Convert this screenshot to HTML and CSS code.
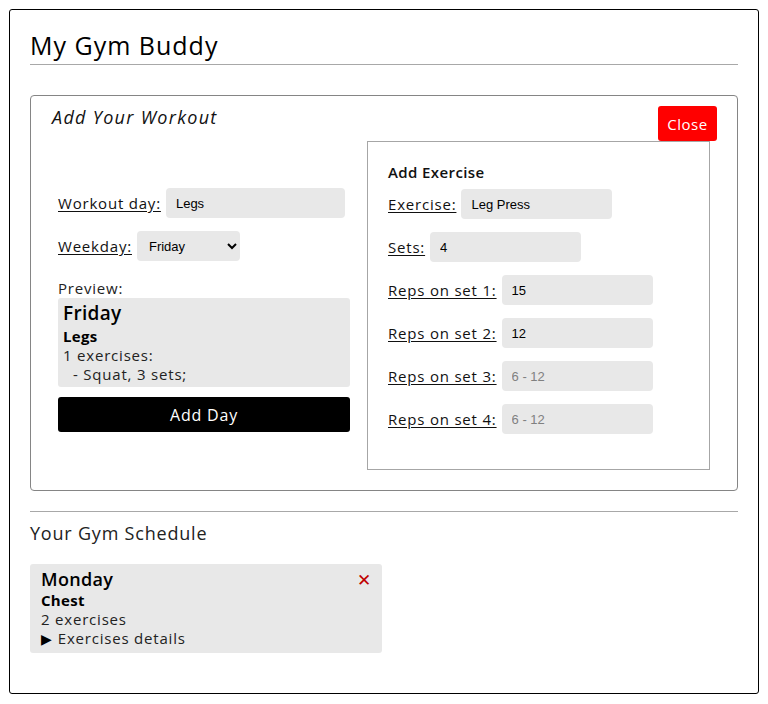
FILE: index.html
```html
<!DOCTYPE html>
<html>
<head>
<meta charset="utf-8">
<link rel="stylesheet" href="styles.css">
</head>
<body>
<div class="app">
  <header class="app-header">
    <h1 class="app-title">My Gym Buddy</h1>
  </header>

  <section class="workout">
    <div class="workout-head">
      <h2 class="workout-title">Add Your Workout</h2>
      <button class="btn-close">Close</button>
    </div>
    <div class="workout-body">
      <div class="day-col">
        <div class="field">
          <label class="lbl" for="wd">Workout day:</label>
          <input id="wd" class="inp inp-day" value="Legs">
        </div>
        <div class="field">
          <label class="lbl" for="wk">Weekday:</label>
          <select id="wk" class="sel">
            <option>Friday</option>
          </select>
        </div>
        <div class="preview-label">Preview:</div>
        <div class="preview">
          <div class="pv-day">Friday</div>
          <div class="pv-name">Legs</div>
          <div class="pv-line">1 exercises:</div>
          <div class="pv-line pv-item">- Squat, 3 sets;</div>
        </div>
        <button class="btn-add">Add Day</button>
      </div>

      <div class="ex-box">
        <h3 class="ex-title">Add Exercise</h3>
        <div class="field">
          <label class="lbl" for="ex">Exercise:</label>
          <input id="ex" class="inp" value="Leg Press">
        </div>
        <div class="field">
          <label class="lbl" for="sets">Sets:</label>
          <input id="sets" class="inp" value="4">
        </div>
        <div class="field">
          <label class="lbl" for="r1">Reps on set 1:</label>
          <input id="r1" class="inp" value="15">
        </div>
        <div class="field">
          <label class="lbl" for="r2">Reps on set 2:</label>
          <input id="r2" class="inp" value="12">
        </div>
        <div class="field">
          <label class="lbl" for="r3">Reps on set 3:</label>
          <input id="r3" class="inp" placeholder="6 - 12">
        </div>
        <div class="field">
          <label class="lbl" for="r4">Reps on set 4:</label>
          <input id="r4" class="inp" placeholder="6 - 12">
        </div>
      </div>
    </div>
  </section>

  <section class="schedule">
    <h2 class="schedule-title">Your Gym Schedule</h2>
    <div class="day-card">
      <div class="card-top">
        <div class="card-day">Monday</div>
        <span class="card-del">✕</span>
      </div>
      <div class="card-name">Chest</div>
      <div class="card-line">2 exercises</div>
      <div class="card-line"><span class="tri">▶</span>Exercises details</div>
    </div>
  </section>
</div>
</body>
</html>
```

FILE: styles.css
```css
* { box-sizing: border-box; }

body {
  margin: 0;
  font-family: "Open Sans", "DejaVu Sans", sans-serif;
  letter-spacing: 0.8px;
  color: #222;
  background: #fff;
}

.app {
  margin: 9px;
  width: 750px;
  height: 685px;
  border: 1px solid #000;
  border-radius: 3px;
  padding: 0 20px;
}

.app-header {
  padding-top: 20px;
  border-bottom: 1px solid #a8a8a8;
}

.app-title {
  margin: 0;
  font-size: 25px;
  font-weight: 500;
  letter-spacing: 1px;
  line-height: 30px;
  padding-bottom: 4px;
  color: #000;
}

.workout {
  margin-top: 30px;
  border: 1px solid #858585;
  border-radius: 4px;
  padding: 10px 0 20px 0;
}

.workout-head {
  display: flex;
  justify-content: space-between;
  align-items: flex-start;
  padding: 0 20px 0 21px;
}

.workout-title {
  margin: 0;
  font-size: 18px;
  font-style: italic;
  font-weight: 400;
  letter-spacing: 1.3px;
  line-height: 22px;
  color: #111;
}

.btn-close {
  background: #ff0000;
  color: #fff;
  border: none;
  border-radius: 3px;
  height: 35px;
  width: 59px;
  font-family: inherit;
  font-size: 15px;
  letter-spacing: 0.5px;
  padding: 0;
}

.workout-body {
  display: flex;
  padding: 0 27px;
  gap: 17px;
}

.day-col {
  width: 292px;
  padding-top: 47px;
  display: flex;
  flex-direction: column;
}

.field {
  display: flex;
  align-items: center;
  gap: 5px;
  margin-bottom: 13px;
}

.lbl {
  font-size: 15px;
  color: #111;
  text-decoration: underline;
  text-underline-offset: 2px;
}

.inp {
  width: 151px;
  height: 30px;
  border: none;
  border-radius: 4px;
  background: #e8e8e8;
  font-family: "Liberation Sans", Arial, sans-serif;
  font-size: 13px;
  letter-spacing: 0;
  color: #000;
  padding: 0 10px;
}

.inp::placeholder { color: #808080; }

.inp-day { width: 179px; }

.sel {
  width: 103px;
  height: 30px;
  border: none;
  border-radius: 4px;
  background: #e8e8e8;
  font-family: "Liberation Sans", Arial, sans-serif;
  font-size: 13px;
  letter-spacing: 0;
  color: #000;
  padding: 0 8px;
}

.preview-label {
  font-size: 15px;
  line-height: 20px;
  margin-top: 4px;
}

.preview {
  background: #e8e8e8;
  border-radius: 3px;
  padding: 3px 5px 3px;
}

.pv-day {
  font-size: 19px;
  font-weight: 600;
  letter-spacing: 0.3px;
  line-height: 25px;
  color: #000;
}

.pv-name {
  font-size: 15px;
  font-weight: 700;
  letter-spacing: 0.3px;
  line-height: 20px;
  color: #000;
}

.pv-line {
  font-size: 15px;
  line-height: 19px;
}

.pv-item { padding-left: 10px; }

.btn-add {
  margin-top: 10px;
  height: 35px;
  background: #000;
  color: #fff;
  border: none;
  border-radius: 3px;
  font-family: inherit;
  font-size: 16px;
  letter-spacing: 0.8px;
}

.ex-box {
  width: 343px;
  border: 1px solid #a6a6a6;
  padding: 20px 20px 22px;
}

.ex-title {
  margin: 0 0 7px;
  font-size: 15px;
  font-weight: 600;
  letter-spacing: 0.4px;
  line-height: 20px;
  color: #111;
}

.schedule {
  margin-top: 20px;
  border-top: 1px solid #a8a8a8;
}

.schedule-title {
  margin: 9px 0 19px;
  font-size: 18px;
  font-weight: 400;
  line-height: 24px;
  color: #222;
}

.day-card {
  width: 352px;
  background: #e8e8e8;
  border-radius: 3px;
  padding: 4px 10px 5px 11px;
}

.card-top {
  display: flex;
  justify-content: space-between;
  align-items: center;
  height: 23px;
}

.card-day {
  font-size: 18px;
  font-weight: 600;
  letter-spacing: 0.3px;
  line-height: 23px;
  color: #000;
}

.card-del {
  color: #c00000;
  font-size: 17px;
  font-weight: 700;
  line-height: 23px;
}

.card-name {
  font-size: 15px;
  font-weight: 700;
  letter-spacing: 0.3px;
  line-height: 19px;
  color: #000;
}

.card-line {
  font-size: 15px;
  line-height: 19px;
}

.tri {
  font-size: 14px;
  color: #000;
  margin-right: 6px;
  letter-spacing: 0;
}
```
